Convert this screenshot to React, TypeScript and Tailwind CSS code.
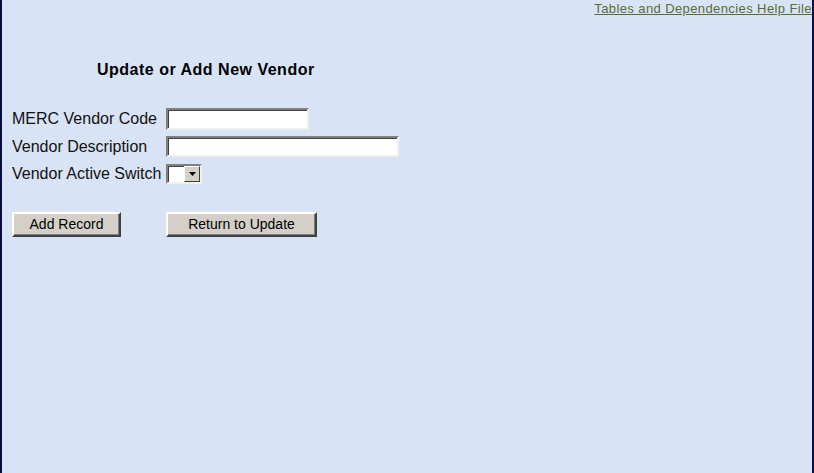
import React from 'react';

const inset =
  'bg-white border-2 border-t-[#808080] border-l-[#808080] border-b-[#f0f0f0] border-r-[#f0f0f0] shadow-[inset_1px_1px_0_#404040]';
const button =
  'h-[25px] bg-[#d4d0c8] text-[14px] text-black border-2 border-t-white border-l-white border-b-[#404040] border-r-[#404040] shadow-[inset_-1px_-1px_0_#808080]';

const App: React.FC = () => {
  return (
    <div
      className="w-[814px] h-[473px] bg-[#d8e3f5] border-x-2 border-[#0c0c44] flex flex-col text-black"
      style={{ fontFamily: '"Liberation Sans", Arial, sans-serif' }}
    >
      {/* help link */}
      <div className="flex justify-end h-[20px] pt-[1px]">
        <a href="#" className="text-[13px] leading-[15px] tracking-[0.4px] text-[#5a6b35] underline">
          Tables and Dependencies Help File
        </a>
      </div>

      {/* title */}
      <h1 className="mt-[40px] ml-[95px] text-[16px] leading-[19px] font-bold tracking-[0.5px]">
        Update or Add New Vendor
      </h1>

      {/* form */}
      <div className="mt-[29px] ml-[10px] grid grid-cols-[154px_auto] items-center gap-y-[6px] text-[#111]">
        <label className="text-[16px] leading-[22px]">MERC Vendor Code</label>
        <input type="text" className={`${inset} w-[143px] h-[22px]`} />

        <label className="text-[16px] leading-[21px]">Vendor Description</label>
        <input type="text" className={`${inset} w-[233px] h-[21px]`} />

        <label className="text-[16px] leading-[20px] mt-[1px]">Vendor Active Switch</label>
        <div className={`${inset} w-[36px] h-[20px] mt-[1px] flex justify-end p-0`}>
          <div className="w-[16px] h-full bg-[#d4d0c8] border border-t-white border-l-white border-b-[#404040] border-r-[#404040] flex items-center justify-center">
            <svg width="7" height="4" viewBox="0 0 7 4">
              <path d="M0 0h7L3.5 4z" fill="#000" />
            </svg>
          </div>
        </div>
      </div>

      {/* actions */}
      <div className="mt-[28px] ml-[10px] flex gap-[45px]">
        <button className={`${button} w-[109px]`}>Add Record</button>
        <button className={`${button} w-[151px]`}>Return to Update</button>
      </div>
    </div>
  );
};

export default App;
